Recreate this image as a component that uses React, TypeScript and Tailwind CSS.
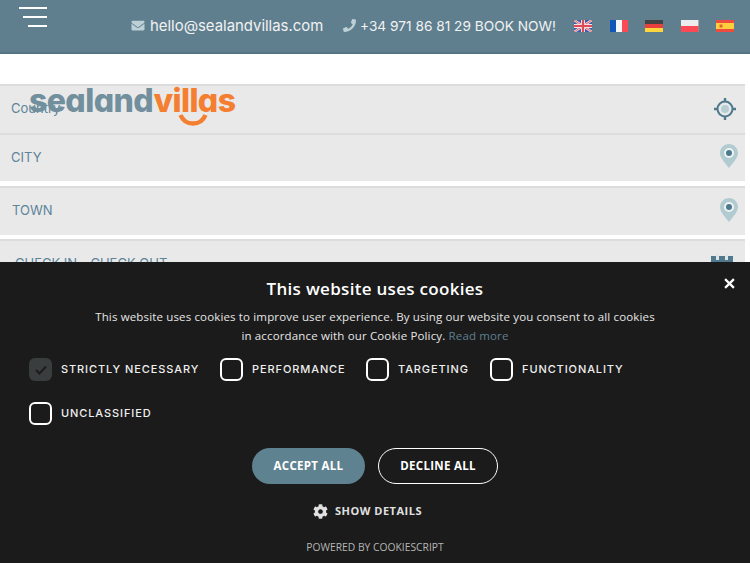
import { FaCog, FaEnvelope, FaPhone } from "react-icons/fa";

const poppins = "font-['Inter','Noto_Sans',sans-serif]";
const openSans = "font-['Open_Sans','Noto_Sans',sans-serif]";

function Flag({ children }: { children: React.ReactNode }) {
  return (
    <svg viewBox="0 0 18 12" className="h-3 w-[18px] shrink-0">
      {children}
    </svg>
  );
}

function Flags() {
  return (
    <div className="ml-[17px] flex items-center gap-[17.5px]">
      <Flag>
        <rect width="18" height="12" fill="#3b5fa8" />
        <path d="M0 0L18 12M18 0L0 12" stroke="#f3d6d6" strokeWidth="2.4" />
        <path d="M0 0L18 12M18 0L0 12" stroke="#d9485a" strokeWidth="0.8" />
        <path d="M9 0V12M0 6H18" stroke="#f5e3e3" strokeWidth="4" />
        <path d="M9 0V12M0 6H18" stroke="#df4a58" strokeWidth="2.2" />
      </Flag>
      <Flag>
        <rect width="6" height="12" fill="#0f56b8" />
        <rect x="6" width="6" height="12" fill="#f5f5f5" />
        <rect x="12" width="6" height="12" fill="#fb4a55" />
      </Flag>
      <Flag>
        <rect width="18" height="4" fill="#434343" />
        <rect y="4" width="18" height="4" fill="#e8403f" />
        <rect y="8" width="18" height="4" fill="#fdd63e" />
      </Flag>
      <Flag>
        <rect width="18" height="6" fill="#ececec" />
        <rect y="6" width="18" height="6" fill="#fb4a55" />
        <rect x="17" width="1" height="12" fill="#8d8d95" opacity="0.7" />
      </Flag>
      <Flag>
        <rect width="18" height="12" fill="#ef4b3f" />
        <rect y="3" width="18" height="6" fill="#fcd03d" />
        <rect x="3.5" y="4.5" width="3" height="3" fill="#e0603a" />
      </Flag>
    </div>
  );
}

function Hamburger() {
  return (
    <div className="ml-[19px] mt-[7px] flex w-7 shrink-0 flex-col items-end gap-[7px] self-start">
      <div className="h-0.5 w-7 bg-white" />
      <div className="h-0.5 w-6 bg-white" />
      <div className="h-0.5 w-[19px] bg-white" />
    </div>
  );
}

function TargetIcon() {
  return (
    <svg viewBox="0 0 22 22" className="h-[22px] w-[22px]">
      <circle cx="11" cy="11" r="7.5" fill="none" stroke="#4f7a8e" strokeWidth="2" />
      <circle cx="11" cy="11" r="4" fill="#b5ced4" />
      <path d="M11 0V4M11 18V22M0 11H4M18 11H22" stroke="#4f7a8e" strokeWidth="2.4" />
    </svg>
  );
}

function PinIcon() {
  return (
    <svg viewBox="0 0 18 24" className="h-6 w-[18px]">
      <path d="M9 0C4 0 0 4 0 9C0 14 6 20 9 24C12 20 18 14 18 9C18 4 14 0 9 0Z" fill="#b2cbd1" />
      <circle cx="9" cy="9" r="5" fill="#eef3f4" />
      <circle cx="9" cy="9" r="3" fill="#4f7a8e" />
    </svg>
  );
}

function CalendarIcon() {
  return (
    <svg viewBox="0 0 22 20" className="h-5 w-[22px]">
      <rect y="2" width="22" height="18" fill="#4f7a8e" />
      <rect x="5" y="0" width="3" height="6" fill="#dfe5e7" />
      <rect x="14" y="0" width="3" height="6" fill="#dfe5e7" />
    </svg>
  );
}

function Field({ label, icon, className }: { label: string; icon: React.ReactNode; className: string }) {
  return (
    <div className={`flex w-[745px] items-center justify-between border-t-2 border-[#dcdcdc] bg-[#e9e9e9] pb-0.5 text-[13px] text-[#5c8499] ${poppins} ${className}`}>
      <span>{label}</span>
      {icon}
    </div>
  );
}

function Check({ label, checked, className }: { label: string; checked?: boolean; className: string }) {
  return (
    <label className={`flex items-center ${className}`}>
      {checked ? (
        <span className="flex h-[23px] w-[23px] items-center justify-center rounded-md bg-[#3a3d3e]">
          <svg viewBox="0 0 12 10" className="h-2.5 w-3">
            <path d="M1 5L4.5 8.5L11 1.5" fill="none" stroke="#1c1c1c" strokeWidth="2" />
          </svg>
        </span>
      ) : (
        <span className="h-[23px] w-[23px] rounded-md border-2 border-white" />
      )}
      <span className={`ml-[9px] text-[11px] font-medium tracking-[0.9px] text-[#efefef] ${poppins}`}>{label}</span>
    </label>
  );
}

function CookiePanel() {
  return (
    <div className={`absolute inset-x-0 top-[262px] h-[301px] bg-[#1b1b1b] text-white ${openSans}`}>
      <button className="absolute right-[15px] top-4 text-white">
        <svg viewBox="0 0 10 10" className="h-[11px] w-[11px]">
          <path d="M1 1L9 9M9 1L1 9" stroke="white" strokeWidth="2" />
        </svg>
      </button>
      <h2 className="mt-[15px] text-center text-[17px] leading-6 font-semibold tracking-[0.3px]">This website uses cookies</h2>
      <p className="mt-1.5 text-center text-[11.5px] leading-[19px] tracking-[0.15px] text-[#e6e6e6]">
        This website uses cookies to improve user experience. By using our website you consent to all cookies
        <br />
        in accordance with our Cookie Policy. <span className="text-[#5f7f8f]">Read more</span>
      </p>
      <div className="ml-[29px] mt-[13px] flex flex-col gap-[21px]">
        <div className="flex">
          <Check label="STRICTLY NECESSARY" checked className="w-[191px]" />
          <Check label="PERFORMANCE" className="w-[146px]" />
          <Check label="TARGETING" className="w-[124px]" />
          <Check label="FUNCTIONALITY" className="w-[140px]" />
        </div>
        <Check label="UNCLASSIFIED" className="w-[191px]" />
      </div>
      <div className="mt-[23px] flex justify-center gap-[13px]">
        <button className="h-9 w-[113px] rounded-[18px] bg-[#5f8291] text-[11.5px] font-bold tracking-[0.3px]">ACCEPT ALL</button>
        <button className="h-9 w-[120px] rounded-[18px] border border-white text-[11.5px] font-bold tracking-[0.3px]">DECLINE ALL</button>
      </div>
      <div className="mt-[18px] flex items-center justify-center gap-[7px] pr-[15px] text-[11px] leading-[18px] font-bold tracking-[0.5px] text-[#e0e0e0]">
        <FaCog className="h-[15px] w-[15px]" />
        SHOW DETAILS
      </div>
      <p className="mt-[18px] text-center text-[10.3px] leading-[18px] text-[#b5b5b5]">POWERED BY COOKIESCRIPT</p>
    </div>
  );
}

export default function App() {
  return (
    <div className="relative h-[563px] w-[750px] overflow-hidden bg-white">
      <header className="flex h-[54px] items-center border-b-2 border-[#567484] bg-[#5f7f8f] text-[#f2f2f2]">
        <Hamburger />
        <div className={`ml-[84px] flex items-center ${poppins}`}>
          <FaEnvelope className="h-[13px] w-[14px] text-[#bcd0d6]" />
          <span className="ml-[5px] w-[175px] whitespace-nowrap text-[14.9px]">hello@sealandvillas.com</span>
          <FaPhone className="ml-[18px] h-[13px] w-[13px] text-[#bcd0d6]" />
          <span className="ml-1 w-[197px] whitespace-nowrap text-[13.7px]">+34 971 86 81 29 BOOK NOW!</span>
        </div>
        <Flags />
      </header>

      <div className="mt-[30px] flex flex-col">
        <Field label="Country" icon={<div className="mr-[9px]"><TargetIcon /></div>} className="h-[49px] pl-[11px]" />
        <Field label="CITY" icon={<div className="mb-1 mr-[7px]"><PinIcon /></div>} className="h-12 pl-[11px] pt-0.5" />
        <Field label="TOWN" icon={<div className="mb-0.5 mr-[7px]"><PinIcon /></div>} className="mt-[5px] h-[49px] pl-3" />
        <Field label="CHECK IN - CHECK OUT" icon={<div className="mr-3"><CalendarIcon /></div>} className="mt-1 h-[49px] items-start pl-[15px] pt-[13px]" />
      </div>

      <div className="absolute left-[29px] top-[81px] flex flex-col">
        <div className="whitespace-nowrap font-['Inter',sans-serif] text-[32px] leading-10 font-extrabold tracking-[-0.6px] [font-feature-settings:'cv11']">
          <span className="text-[#718f9d]">sealand</span>
          <span className="text-[#f57f30]">villas</span>
        </div>
        <svg viewBox="0 0 30 13" className="absolute left-[149px] top-[32px] h-[13px] w-[30px]">
          <path d="M2.5 2C5 8 9 10.5 15 10.5C21 10.5 25 8 27.5 2" fill="none" stroke="#f57f30" strokeWidth="4.5" />
        </svg>
      </div>

      <CookiePanel />
    </div>
  );
}
